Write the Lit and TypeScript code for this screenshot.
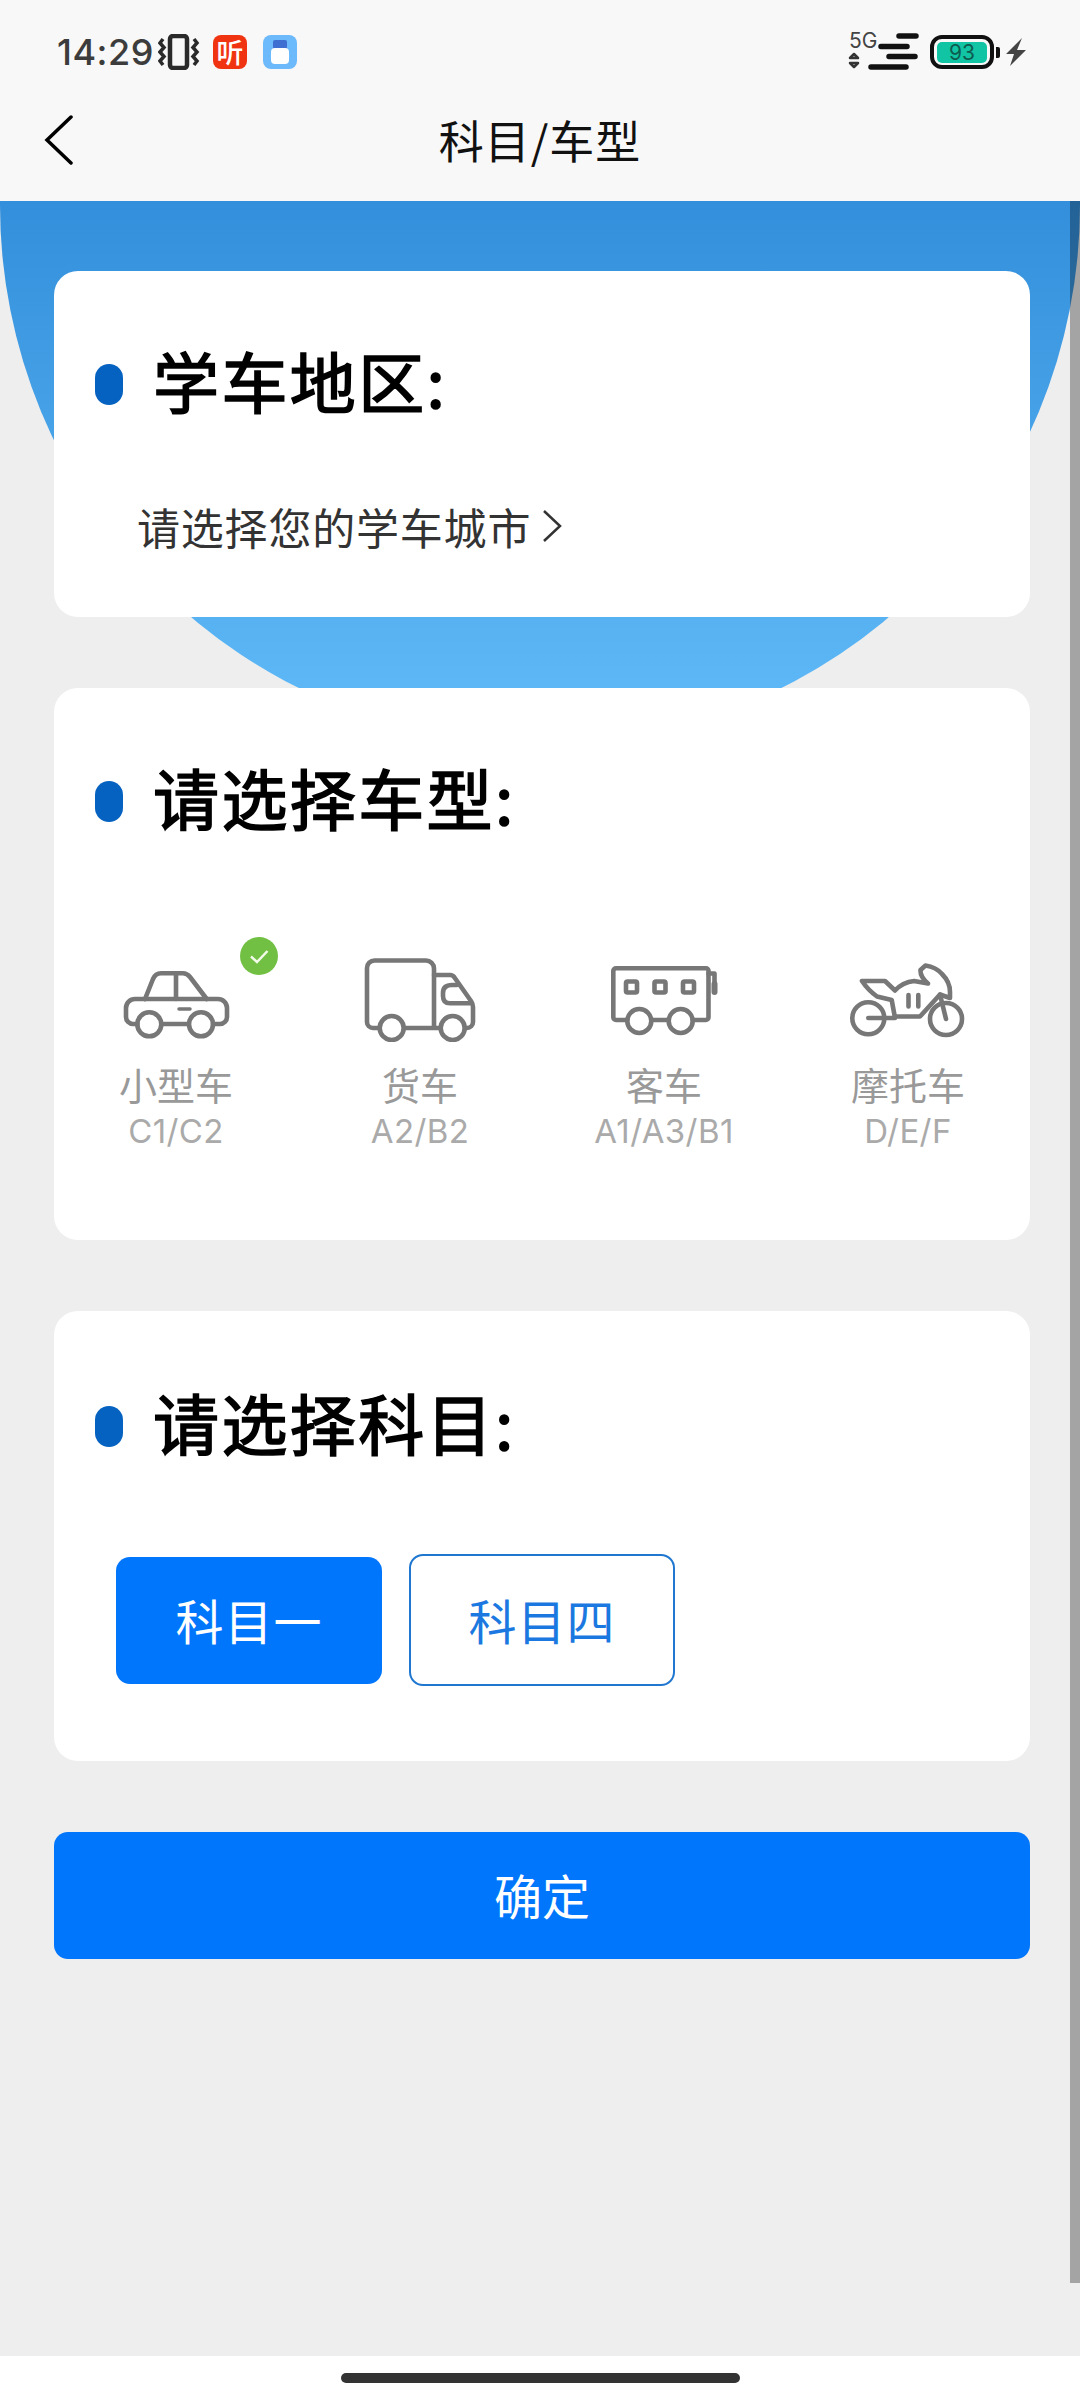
import { LitElement, html, css, svg } from "lit";
import { customElement, state } from "lit/decorators.js";

const CAR = svg`
  <path d="M21.500 66H17a7 7 0 0 1-7-7V50a9 9 0 0 1 9-9H102a9 9 0 0 1 9 9V59a7 7 0 0 1-7 7H97M45.800 66H72.500" />
  <path d="M29 41L37 21Q39.500 15.300 45 15.300H67Q71 15.300 74 19L90.700 41M60 15.300V41" />
  <path d="M63 51H74" stroke-width="3.500" />
  <circle cx="33.300" cy="66.300" r="12" />
  <circle cx="85" cy="66.300" r="12" />`;

const TRUCK = svg`
  <path d="M19.500 70H13a6 6 0 0 1-6-6V10a7.500 7.500 0 0 1 7.500-7.500H66a8 8 0 0 1 8 8V70M44 70H80.500" />
  <path d="M74 17H90Q93 17 94.500 19.500L111 43Q113 46 113 49V64a6 6 0 0 1-6 6H105" />
  <path d="M110.500 45.300H90Q83 45.300 83 38V35Q83 27 92 27H97" />
  <circle cx="31.700" cy="70" r="12" />
  <circle cx="92.700" cy="70" r="12" />`;

const BUS = svg`
  <path d="M23.300 62H12a2.700 2.700 0 0 1-2.700-2.700V13a2.700 2.700 0 0 1 2.700-2.700H102a2.500 2.500 0 0 1 2.500 2.500V59.300a2.700 2.700 0 0 1-2.700 2.700H88.700M47.300 62H64.700" />
  <rect x="22" y="23.500" width="11" height="11" rx="1.500" />
  <rect x="50.500" y="23.500" width="11" height="11" rx="1.500" />
  <rect x="79" y="23.500" width="11" height="11" rx="1.500" />
  <path d="M104.500 15.500H110.500V34" />
  <path d="M110.500 26V34" stroke-width="6" />
  <circle cx="35.300" cy="63" r="12" />
  <circle cx="76.700" cy="63" r="12" />`;

const MOTO = svg`
  <circle cx="20.300" cy="60.300" r="16" />
  <circle cx="98" cy="61" r="16" />
  <path d="M20.300 60H47L43.700 42L29 38.500Q20 32 14 23H37L47 32.500Q55 24 66 23L80 25.500Q72 19 72.500 12L77.500 7.500Q88 9 94 16Q102 24 102 34V40L92 36.500L72 58.500H47" />
  <path d="M92 36.500L98 61M60.500 37V48.500M70.300 37V48.500" />`;

const VEHICLES = [
  { name: "小型车", code: "C1/C2", icon: CAR, checked: true },
  { name: "货车", code: "A2/B2", icon: TRUCK, checked: false },
  { name: "客车", code: "A1/A3/B1", icon: BUS, checked: false },
  { name: "摩托车", code: "D/E/F", icon: MOTO, checked: false },
];

@customElement("app-root")
export class AppRoot extends LitElement {
  static override styles = css`
    :host {
      display: flex;
      flex-direction: column;
      position: relative;
      width: 1080px;
      height: 2400px;
      overflow: hidden;
      background: #fff;
      font-family: "Noto Sans CJK SC", "Noto Sans", sans-serif;
    }
    .top {
      height: 201px;
      flex: none;
      background: #f8f8f8;
    }
    .status {
      height: 104px;
      box-sizing: border-box;
      padding: 0 54px 0 57px;
      display: flex;
      align-items: center;
      justify-content: space-between;
    }
    .status-left,
    .status-right {
      display: flex;
      align-items: center;
    }
    .time {
      font-family: Inter, sans-serif;
      font-size: 36px;
      font-weight: 500;
      letter-spacing: 0.5px;
      color: #3c3c3c;
      line-height: 44px;
      width: 101px;
    }
    .app-icon {
      width: 34px;
      height: 34px;
      border-radius: 8px;
      display: flex;
      align-items: center;
      justify-content: center;
    }
    .app-red {
      margin-left: 13px;
      background: #f03310;
      color: #fff;
      font-size: 27px;
      font-weight: 500;
      line-height: 34px;
    }
    .app-blue {
      margin-left: 16px;
      background: #6cb9fb;
    }
    .battery {
      margin-left: 10px;
    }
    .bolt {
      margin-left: 6px;
    }
    .nav {
      height: 97px;
      box-sizing: border-box;
      padding: 0 44px 25px;
      display: grid;
      grid-template-columns: 1fr auto 1fr;
      align-items: center;
    }
    .back {
      display: block;
    }
    .nav-title {
      font-size: 45px;
      line-height: 60px;
      color: #111;
      letter-spacing: 1px;
    }
    main {
      flex: 1;
      position: relative;
      background: #eee;
      box-sizing: border-box;
      padding: 70px 50px 0 54px;
      display: flex;
      flex-direction: column;
      gap: 71px;
    }
    .hero {
      position: absolute;
      left: 0;
      top: 0;
      width: 1080px;
      height: 544px;
      border-radius: 0 0 540px 540px;
      background: linear-gradient(180deg, #338fdb 0%, #62bcf9 100%);
    }
    .scrollbar {
      position: absolute;
      right: 0;
      top: 0;
      width: 10px;
      height: 2082px;
      background: rgba(0, 0, 0, 0.31);
    }
    .card {
      position: relative;
      background: #fff;
      border-radius: 24px;
    }
    .card-area {
      height: 346px;
      padding-top: 71px;
      box-sizing: border-box;
    }
    .card-type {
      height: 552px;
      padding-top: 71px;
      box-sizing: border-box;
    }
    .card-subject {
      height: 450px;
      padding-top: 73px;
      box-sizing: border-box;
    }
    .heading {
      display: flex;
      align-items: center;
      height: 84px;
      padding-left: 41px;
    }
    .dot {
      width: 28px;
      height: 41px;
      border-radius: 14px;
      background: #0562c0;
      flex: none;
    }
    .heading-text {
      margin: -10px 0 0 30px;
      font-size: 66px;
      line-height: 84px;
      font-weight: 400;
      -webkit-text-stroke: 1.6px #000;
      letter-spacing: 2.4px;
      color: #000;
    }
    .city {
      margin-top: 70px;
      padding-left: 83px;
      display: flex;
      align-items: center;
      height: 60px;
      font-size: 43px;
      letter-spacing: 0.8px;
      color: #333;
    }
    .city svg {
      margin-left: 11px;
    }
    .vehicles {
      margin-top: 115px;
      display: grid;
      grid-template-columns: repeat(4, 244px);
    }
    .vehicle {
      position: relative;
      display: flex;
      flex-direction: column;
      align-items: center;
    }
    .vehicle svg.icon {
      display: block;
      fill: none;
      stroke: #777;
      stroke-width: 4.6;
      stroke-linecap: round;
      stroke-linejoin: round;
    }
    .check {
      position: absolute;
      left: 186px;
      top: -21px;
    }
    .vehicle-name {
      margin-top: 20px;
      font-size: 38px;
      line-height: 44px;
      color: #999;
    }
    .vehicle-code {
      margin-top: 4px;
      font-family: Inter, "Noto Sans", sans-serif;
      font-size: 33px;
      letter-spacing: 0.4px;
      line-height: 42px;
      color: #aaa;
    }
    .subjects {
      margin-top: 86px;
      padding-left: 62px;
      display: flex;
      align-items: center;
      gap: 27px;
    }
    .subject {
      box-sizing: border-box;
      padding-bottom: 2px;
      display: flex;
      align-items: center;
      justify-content: center;
      font-size: 48px;
      letter-spacing: 1px;
    }
    .subject-on {
      width: 266px;
      height: 127px;
      background: #0076fd;
      color: #fff;
      border-radius: 14px;
    }
    .subject-off {
      width: 266px;
      height: 132px;
      background: #fff;
      color: #1a78e0;
      border: 2px solid #1f77d0;
      border-radius: 14px;
    }
    .confirm {
      position: relative;
      height: 127px;
      box-sizing: border-box;
      padding-bottom: 4px;
      background: #0076fd;
      border-radius: 14px;
      color: #fff;
      font-size: 48px;
      display: flex;
      align-items: center;
      justify-content: center;
    }
    .home {
      height: 44px;
      flex: none;
      display: flex;
      align-items: center;
      justify-content: center;
    }
    .home-bar {
      width: 399px;
      height: 10px;
      border-radius: 5px;
      background: #333;
    }
  `;

  @state() private selected = 0;

  private renderHeading(text: string) {
    return html`<div class="heading">
      <span class="dot"></span><span class="heading-text">${text}</span>
    </div>`;
  }

  private renderStatus() {
    return html`<div class="status">
      <div class="status-left">
        <span class="time">14:29</span>
        <svg width="42" height="36" viewBox="0 0 42 36" fill="none" stroke="#2a2a2a">
          <rect x="12" y="2" width="17" height="32" rx="3" stroke-width="4.500" />
          <path d="M5 5L2 9L6 13.500L2 18L6 22.500L2 27L5 31M36 5L39 9L35 13.500L39 18L35 22.500L39 27L36 31" stroke-width="3.500" />
        </svg>
        <span class="app-icon app-red">听</span>
        <span class="app-icon app-blue">
          <svg width="20" height="24" viewBox="0 0 20 24">
            <rect x="3" y="0" width="14" height="9" rx="2" fill="#3f6fd0" />
            <rect x="1" y="8" width="18" height="16" rx="4" fill="#fff" />
          </svg>
        </span>
      </div>
      <div class="status-right">
        <svg width="72" height="46" viewBox="-2 -4 72 46">
          <text x="-1" y="15" font-family="Inter, sans-serif" font-size="21" fill="#444">5G</text>
          <path d="M4 21L8 25H0ZM4 34L8 30H0Z" fill="none" stroke="#333" stroke-width="2.500" stroke-linejoin="round" />
          <g stroke="#111" stroke-width="5.500" stroke-linecap="round">
            <path d="M49 3H66M31 13.500H57M39 23.500H65M21 34H56" />
          </g>
        </svg>
        <svg class="battery" width="70" height="34" viewBox="0 0 70 34">
          <rect x="2" y="2" width="60" height="30" rx="10" fill="none" stroke="#111" stroke-width="4" />
          <rect x="7" y="7" width="50" height="21" rx="5" fill="#11c4a3" />
          <text x="32" y="25" text-anchor="middle" font-family="Inter, sans-serif" font-size="21" fill="#0d5c50">93</text>
          <path d="M66 12H68A2 2 0 0 1 70 14V21A2 2 0 0 1 68 23H66Z" fill="#111" />
        </svg>
        <svg class="bolt" width="20" height="30" viewBox="0 0 20 30">
          <path d="M16 1L0 17H8L4 29L20 13H11Z" fill="#444" />
        </svg>
      </div>
    </div>`;
  }

  private renderVehicle(v: (typeof VEHICLES)[number]) {
    return html`<div class="vehicle">
      <svg class="icon" width="120" height="84" viewBox="0 0 120 84">${v.icon}</svg>
      ${v.checked
        ? html`<svg class="check" width="38" height="38" viewBox="0 0 38 38">
            <circle cx="19" cy="19" r="19" fill="#72c043" />
            <path d="M11 19.500L17 25L27.500 14" fill="none" stroke="#f2fbe9" stroke-width="2.500" />
          </svg>`
        : ""}
      <span class="vehicle-name">${v.name}</span>
      <span class="vehicle-code">${v.code}</span>
    </div>`;
  }

  override render() {
    return html`
      <div class="top">
        ${this.renderStatus()}
        <div class="nav">
          <svg class="back" width="30" height="50" viewBox="0 0 30 50" fill="none" stroke="#000" stroke-width="3.500" stroke-linecap="round">
            <path d="M27 2L3 25L27 48" />
          </svg>
          <span class="nav-title">科目/车型</span>
        </div>
      </div>
      <main>
        <div class="hero"></div>
        <section class="card card-area">
          ${this.renderHeading("学车地区:")}
          <div class="city">
            请选择您的学车城市
            <svg width="20" height="34" viewBox="0 0 20 34" fill="none" stroke="#333" stroke-width="2.500">
              <path d="M2 2L18 17L2 32" />
            </svg>
          </div>
        </section>
        <section class="card card-type">
          ${this.renderHeading("请选择车型:")}
          <div class="vehicles">${VEHICLES.map((v) => this.renderVehicle(v))}</div>
        </section>
        <section class="card card-subject">
          ${this.renderHeading("请选择科目:")}
          <div class="subjects">
            <div class="subject ${this.selected === 0 ? "subject-on" : "subject-off"}">科目一</div>
            <div class="subject ${this.selected === 1 ? "subject-on" : "subject-off"}">科目四</div>
          </div>
        </section>
        <div class="confirm">确定</div>
        <div class="scrollbar"></div>
      </main>
      <div class="home"><span class="home-bar"></span></div>
    `;
  }
}

declare global {
  interface HTMLElementTagNameMap {
    "app-root": AppRoot;
  }
}
